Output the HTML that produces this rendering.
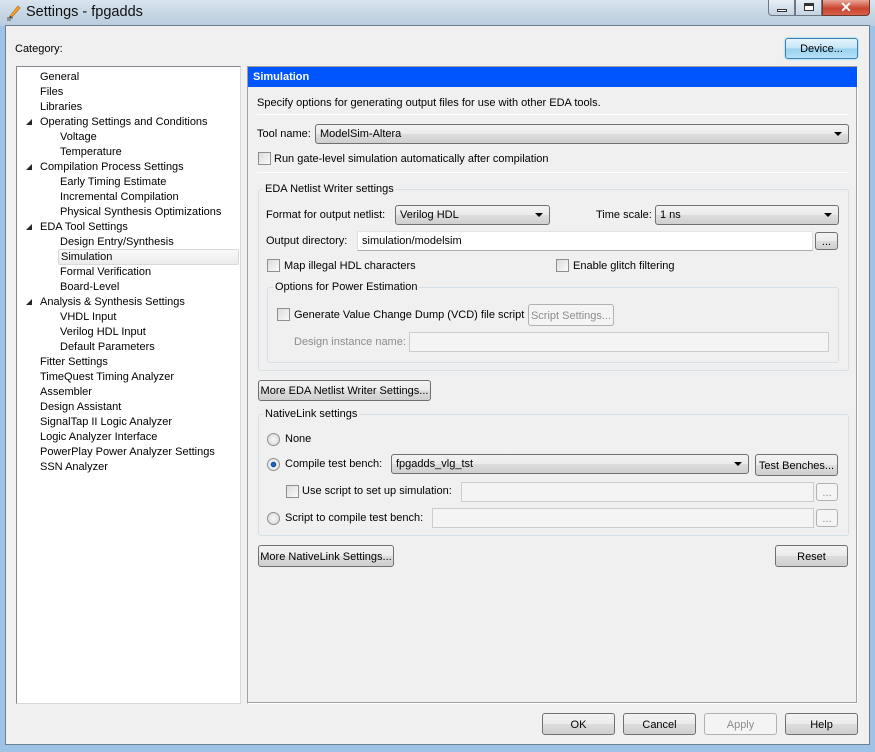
<!DOCTYPE html>
<html><head><meta charset="utf-8"><style>
*{box-sizing:border-box;margin:0;padding:0}
body{width:875px;height:752px;overflow:hidden;font-family:"Liberation Sans",Tahoma,sans-serif;font-size:11px;color:#000;background:#9fc3e6;position:relative}
.a{position:absolute;white-space:nowrap;line-height:14px}
.title{left:0;top:0;width:875px;height:26px;background:linear-gradient(180deg,#d9e4ee,#c4d4e2 60%,#b9cde0)}
.client{left:5px;top:25px;width:865px;height:720px;background:#f0f0f0;border:1px solid #6d7f93}
.btn{position:absolute;white-space:nowrap;border:1px solid #707070;border-radius:3px;background:linear-gradient(#f2f2f2 0,#ebebeb 50%,#dddddd 51%,#cfcfcf 100%);display:flex;align-items:center;justify-content:center;padding-top:1px;overflow:hidden}
.dis{border-color:#adb2b5;background:#f4f4f4;color:#8d8d8d}
.combo{position:absolute;white-space:nowrap;border:1px solid #707070;border-radius:3px;background:linear-gradient(#f2f2f2 0,#ebebeb 50%,#dddddd 51%,#cfcfcf 100%);padding-left:4px;line-height:19px}
.combo:after{content:"";position:absolute;right:6px;top:7px;border-left:4px solid transparent;border-right:4px solid transparent;border-top:4px solid #000}
.inp{position:absolute;background:#fff;border:1px solid #abadb3;border-top-color:#e3e3e3;border-left-color:#e2e3ea;border-right-color:#dbdfe6;padding-left:4px;line-height:19px}
.inp.d{background:#f4f4f4;border-color:#ccc}
.cb{position:absolute;width:13px;height:13px;border:1px solid #8e8f8f;background:linear-gradient(135deg,#dcdcdc,#fafafa)}
.rb{position:absolute;width:13px;height:13px;border-radius:50%;border:1px solid #8e8f8f;background:radial-gradient(#f8f8f8,#d4d4d4)}
.grp{position:absolute;border:1px solid #d5dfe5;border-radius:3px}
.gt{position:absolute;white-space:nowrap;background:#f0f0f0;padding:0 2px;line-height:14px}
.tree div{position:absolute;line-height:16px;white-space:nowrap}
.arr{position:absolute;width:0;height:0;border-left:6px solid transparent;border-bottom:6px solid #262626}
.hline{position:absolute;height:1px;background:#a0a0a0;border-bottom:1px solid #fff}
</style></head><body>
<div class="a title"></div>
<div class="a" style="left:5px;top:3px;width:16px;height:18px">
<svg width="16" height="18"><line x1="2" y1="15" x2="8" y2="15" stroke="#555" stroke-width="1"/><line x1="2" y1="17" x2="6" y2="17" stroke="#555"/><path d="M5 13 L13 3 L15 5 L7 14 Z" fill="#f5a623" stroke="#b06000" stroke-width=".6"/><path d="M5 13 L7 14 L4 15Z" fill="#333"/></svg></div>
<div class="a" style="left:26px;top:4px;font-size:14.5px;line-height:16px;color:#111">Settings - fpgadds</div>
<div class="a" style="left:768px;top:0;width:27px;height:16px;border:1px solid #6d7785;border-top:none;border-radius:0 0 0 4px;background:linear-gradient(#e7eef6,#c5d3e2)"><div class="a" style="left:8px;top:9px;width:10px;height:3px;background:#fff;border:1px solid #333"></div></div>
<div class="a" style="left:795px;top:0;width:27px;height:16px;border:1px solid #6d7785;border-top:none;background:linear-gradient(#e7eef6,#c5d3e2)"><div class="a" style="left:8px;top:3px;width:10px;height:8px;border:1px solid #333;border-top-width:3px;background:#fff"></div></div>
<div class="a" style="left:822px;top:0;width:48px;height:16px;border:1px solid #6d3a30;border-top:none;border-radius:0 0 4px 0;background:linear-gradient(#e9a89a,#c9452f 55%,#d6614a);color:#fff;font-weight:bold;font-size:14px;text-align:center;line-height:14px">✕</div>
<div class="a client"></div>
<div class="a" style="left:15px;top:42px">Category:</div>
<div class="btn" style="left:785px;top:38px;width:73px;height:21px;border-color:#3c7fb1;background:linear-gradient(#e5f4fc,#c4e5f6 50%,#98d1ef 51%,#b6e0f5);box-shadow:0 0 2px #6bd0f8">Device...</div>
<div class="a tree" style="left:16px;top:66px;width:225px;height:638px;background:#fff;border:1px solid #828790;border-right-color:#d9d9d9;border-bottom-color:#d9d9d9">
<div style="left:23px;top:2px">General</div>
<div style="left:23px;top:17px">Files</div>
<div style="left:23px;top:32px">Libraries</div>
<span class="arr" style="left:9px;top:52px"></span><div style="left:23px;top:47px">Operating Settings and Conditions</div>
<div style="left:43px;top:62px">Voltage</div>
<div style="left:43px;top:77px">Temperature</div>
<span class="arr" style="left:9px;top:97px"></span><div style="left:23px;top:92px">Compilation Process Settings</div>
<div style="left:43px;top:107px">Early Timing Estimate</div>
<div style="left:43px;top:122px">Incremental Compilation</div>
<div style="left:43px;top:137px">Physical Synthesis Optimizations</div>
<span class="arr" style="left:9px;top:157px"></span><div style="left:23px;top:152px">EDA Tool Settings</div>
<div style="left:43px;top:167px">Design Entry/Synthesis</div>
<div style="left:41px;top:182px;width:181px;height:16px;border:1px solid #d9d9d9;border-radius:2px;background:linear-gradient(#fafafa,#ececec);padding-left:2px;line-height:15px">Simulation</div>
<div style="left:43px;top:197px">Formal Verification</div>
<div style="left:43px;top:212px">Board-Level</div>
<span class="arr" style="left:9px;top:232px"></span><div style="left:23px;top:227px">Analysis &amp; Synthesis Settings</div>
<div style="left:43px;top:242px">VHDL Input</div>
<div style="left:43px;top:257px">Verilog HDL Input</div>
<div style="left:43px;top:272px">Default Parameters</div>
<div style="left:23px;top:287px">Fitter Settings</div>
<div style="left:23px;top:302px">TimeQuest Timing Analyzer</div>
<div style="left:23px;top:317px">Assembler</div>
<div style="left:23px;top:332px">Design Assistant</div>
<div style="left:23px;top:347px">SignalTap II Logic Analyzer</div>
<div style="left:23px;top:362px">Logic Analyzer Interface</div>
<div style="left:23px;top:377px">PowerPlay Power Analyzer Settings</div>
<div style="left:23px;top:392px">SSN Analyzer</div>
</div>
<div class="a" style="left:247px;top:66px;width:611px;height:638px;border:1px solid #a0a0a0;border-right-color:#fff;border-bottom-color:#fff;box-shadow:inset -1px -1px 0 #a0a0a0"></div>
<div class="a" style="left:248px;top:67px;width:609px;height:20px;background:#0055ff;color:#fff;font-weight:bold;padding-left:5px;line-height:20px">Simulation</div>
<div class="a" style="left:257px;top:96px">Specify options for generating output files for use with other EDA tools.</div>
<div class="hline" style="left:257px;top:114px;width:591px"></div>
<div class="a" style="left:257px;top:127px">Tool name:</div>
<div class="combo" style="left:315px;top:124px;width:534px;height:20px">ModelSim-Altera</div>
<div class="cb" style="left:258px;top:152px"></div><div class="a" style="left:274px;top:152px">Run gate-level simulation automatically after compilation</div>
<div class="hline" style="left:257px;top:172px;width:591px"></div>
<div class="grp" style="left:258px;top:189px;width:591px;height:182px"></div>
<div class="gt" style="left:263px;top:182px">EDA Netlist Writer settings</div>
<div class="a" style="left:266px;top:208px">Format for output netlist:</div>
<div class="combo" style="left:395px;top:205px;width:155px;height:20px">Verilog HDL</div>
<div class="a" style="left:596px;top:208px">Time scale:</div>
<div class="combo" style="left:655px;top:205px;width:184px;height:20px">1 ns</div>
<div class="a" style="left:266px;top:234px">Output directory:</div>
<div class="inp" style="left:357px;top:231px;width:456px;height:20px">simulation/modelsim</div>
<div class="btn" style="left:815px;top:232px;width:23px;height:18px">...</div>
<div class="cb" style="left:267px;top:259px"></div><div class="a" style="left:284px;top:259px">Map illegal HDL characters</div>
<div class="cb" style="left:556px;top:259px"></div><div class="a" style="left:573px;top:259px">Enable glitch filtering</div>
<div class="grp" style="left:267px;top:287px;width:572px;height:76px"></div>
<div class="gt" style="left:273px;top:280px">Options for Power Estimation</div>
<div class="cb" style="left:277px;top:308px"></div><div class="a" style="left:294px;top:308px">Generate Value Change Dump (VCD) file script</div>
<div class="btn dis" style="left:528px;top:304px;width:86px;height:22px">Script Settings...</div>
<div class="a" style="left:294px;top:335px;color:#8d8d8d">Design instance name:</div>
<div class="inp d" style="left:409px;top:332px;width:420px;height:20px"></div>
<div class="btn" style="left:258px;top:380px;width:173px;height:21px">More EDA Netlist Writer Settings...</div>
<div class="grp" style="left:258px;top:414px;width:591px;height:122px"></div>
<div class="gt" style="left:263px;top:407px">NativeLink settings</div>
<div class="rb" style="left:267px;top:433px"></div><div class="a" style="left:285px;top:432px">None</div>
<div class="rb" style="left:267px;top:458px;background:radial-gradient(#2a7bd1 0,#0a4a93 30%,#f4f4f4 40%,#d4d4d4)"></div><div class="a" style="left:285px;top:457px">Compile test bench:</div>
<div class="combo" style="left:391px;top:454px;width:358px;height:20px">fpgadds_vlg_tst</div>
<div class="btn" style="left:755px;top:454px;width:83px;height:22px">Test Benches...</div>
<div class="cb" style="left:286px;top:485px"></div><div class="a" style="left:302px;top:484px">Use script to set up simulation:</div>
<div class="inp d" style="left:461px;top:482px;width:353px;height:20px"></div>
<div class="btn dis" style="left:816px;top:483px;width:22px;height:18px">...</div>
<div class="rb" style="left:267px;top:512px"></div><div class="a" style="left:285px;top:511px">Script to compile test bench:</div>
<div class="inp d" style="left:432px;top:508px;width:382px;height:20px"></div>
<div class="btn dis" style="left:816px;top:509px;width:22px;height:18px">...</div>
<div class="btn" style="left:258px;top:545px;width:136px;height:22px">More NativeLink Settings...</div>
<div class="btn" style="left:775px;top:545px;width:73px;height:22px">Reset</div>
<div class="btn" style="left:542px;top:713px;width:73px;height:22px">OK</div>
<div class="btn" style="left:623px;top:713px;width:73px;height:22px">Cancel</div>
<div class="btn dis" style="left:704px;top:713px;width:73px;height:22px">Apply</div>
<div class="btn" style="left:785px;top:713px;width:73px;height:22px">Help</div>
</body></html>
